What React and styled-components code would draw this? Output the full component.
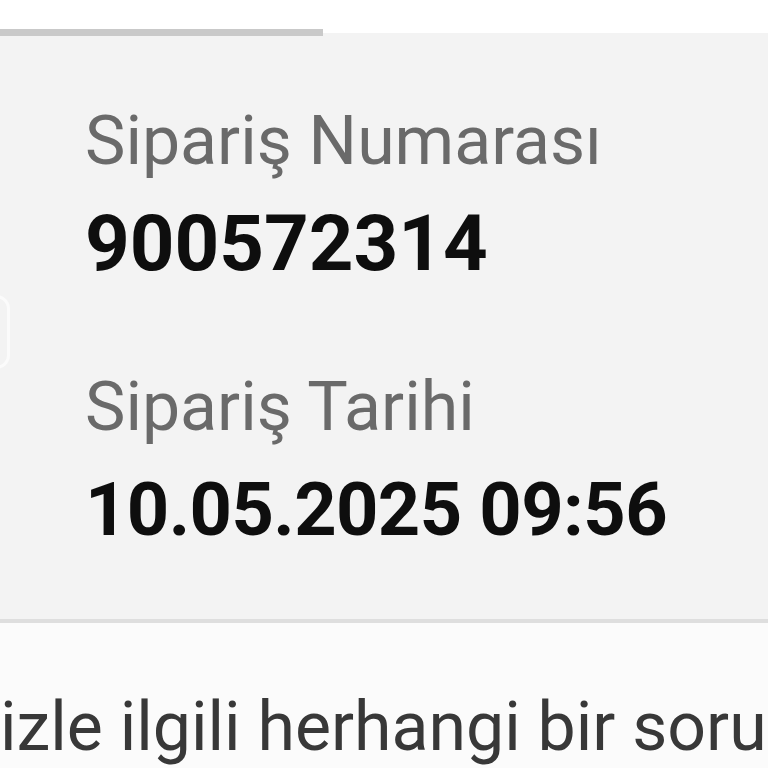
import React from "react";
import styled, { createGlobalStyle } from "styled-components";

const GlobalStyle = createGlobalStyle`
  html, body {
    margin: 0;
    padding: 0;
    background: #ffffff;
    overflow: hidden;
  }
  body {
    font-family: Roboto, "Noto Sans", sans-serif;
  }
`;

const Screen = styled.div`
  width: 768px;
  height: 768px;
  display: flex;
  flex-direction: column;
  overflow: hidden;
  background: #fbfbfb;
`;

const TopBar = styled.div`
  height: 36px;
  flex-shrink: 0;
  background: linear-gradient(#ffffff 33px, #f3f3f3 33px);
  display: flex;
  align-items: flex-end;
`;

const Progress = styled.div`
  height: 7px;
  width: 323px;
  background: #c9c9c9;
`;

const InfoPanel = styled.div`
  position: relative;
  flex-shrink: 0;
  background: #f3f3f3;
  border-bottom: 4px solid #dedede;
  padding: 65px 0 64px 85px;
  display: flex;
  flex-direction: column;
  gap: 78px;
`;

const EdgeTab = styled.div`
  position: absolute;
  left: -22px;
  top: 259px;
  width: 26px;
  height: 68px;
  border-radius: 14px;
  border: 3px solid #fbfbfb;
`;

const Field = styled.div`
  display: flex;
  flex-direction: column;
  gap: 18px;
`;

const Label = styled.span`
  font-size: 68px;
  line-height: 80px;
  color: #6a6a6a;
  font-weight: 400;
  white-space: nowrap;
`;

const Value = styled.span`
  font-size: ${(p) => p.$size || 78}px;
  line-height: 90px;
  letter-spacing: ${(p) => (p.$size ? "-0.6px" : "0")};
  color: #0e0e0e;
  font-weight: 700;
  white-space: nowrap;
`;

const Note = styled.p`
  margin: 64px 0 0 0;
  font-size: 68px;
  line-height: 80px;
  color: #383838;
  white-space: nowrap;
`;

export default function App() {
  return (
    <>
      <GlobalStyle />
      <Screen>
        <TopBar>
          <Progress />
        </TopBar>
        <InfoPanel>
          <EdgeTab />
          <Field>
            <Label>Sipariş Numarası</Label>
            <Value>900572314</Value>
          </Field>
          <Field>
            <Label>Sipariş Tarihi</Label>
            <Value $size={74}>10.05.2025 09:56</Value>
          </Field>
        </InfoPanel>
        <Note>izle ilgili herhangi bir soru</Note>
      </Screen>
    </>
  );
}
